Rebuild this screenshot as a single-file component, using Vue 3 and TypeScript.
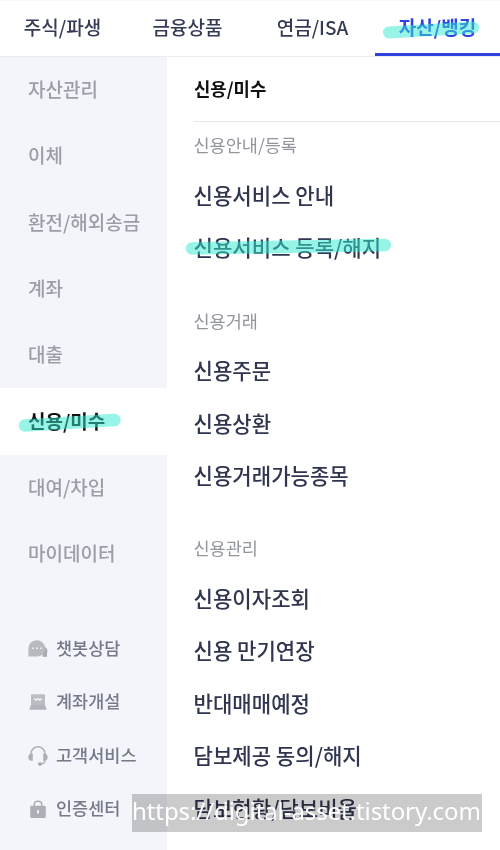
<script setup lang="ts">
type IconName = 'chat' | 'account' | 'headset' | 'lock'

interface Group {
  label: string
  items: { text: string; marked?: boolean }[]
}

const tabs: string[] = ['주식/파생', '금융상품', '연금/ISA', '자산/뱅킹']
const activeTab = '자산/뱅킹'

const categories: string[] = ['자산관리', '이체', '환전/해외송금', '계좌', '대출', '신용/미수', '대여/차입', '마이데이터']
const activeCategory = '신용/미수'

const shortcuts: { icon: IconName; text: string }[] = [
  { icon: 'chat', text: '챗봇상담' },
  { icon: 'account', text: '계좌개설' },
  { icon: 'headset', text: '고객서비스' },
  { icon: 'lock', text: '인증센터' },
]

const groups: Group[] = [
  { label: '신용안내/등록', items: [{ text: '신용서비스 안내' }, { text: '신용서비스 등록/해지', marked: true }] },
  { label: '신용거래', items: [{ text: '신용주문' }, { text: '신용상환' }, { text: '신용거래가능종목' }] },
  {
    label: '신용관리',
    items: [
      { text: '신용이자조회' },
      { text: '신용 만기연장' },
      { text: '반대매매예정' },
      { text: '담보제공 동의/해지' },
      { text: '담보현황/담보비율' },
    ],
  },
]
</script>

<template>
  <div class="screen">
    <nav class="tabs">
      <a v-for="tab in tabs" :key="tab" class="tab" :class="{ active: tab === activeTab }">
        <span>{{ tab }}</span>
        <svg v-if="tab === activeTab" class="marker marker-tab" viewBox="0 0 97 20">
          <path d="M6 12.500L90 7.500" stroke-width="12" />
        </svg>
      </a>
    </nav>
    <div class="body">
      <aside class="side">
        <a v-for="c in categories" :key="c" class="category" :class="{ active: c === activeCategory }">
          <span>{{ c }}</span>
          <svg v-if="c === activeCategory" class="marker marker-category" viewBox="0 0 104 22">
            <path d="M7 13.500L96.500 8" stroke-width="12.500" />
          </svg>
        </a>
        <div class="shortcuts">
          <a v-for="s in shortcuts" :key="s.text" class="shortcut">
            <svg class="icon" viewBox="0 0 20 20">
              <g v-if="s.icon === 'chat'">
                <path d="M15 7a5.500 5.500 0 0 1 4 7.500v3.200h-4.500z" fill="#a7abb2" />
                <path d="M.4 17.500V9.700A8.400 8.200 0 1 1 9 17.600H.4z" fill="#b7babf" />
                <path d="M4.200 8.500h1.700v1.600H4.200zM8.100 8.500h1.700v1.600H8.100zM12 8.500h1.700v1.600H12z" fill="#f4f5fa" />
              </g>
              <g v-else-if="s.icon === 'account'">
                <path d="M3 2.300h14v11.500H3z" fill="#babdc2" />
                <path d="M3 13h14l1.800 4.700H1.200z" fill="#b0b3b9" />
                <path d="M6.800 6l1.500 3L10 6l1.700 3 1.500-3M6 7.300h8" fill="none" stroke="#f4f5fa" stroke-width=".85" />
              </g>
              <g v-else-if="s.icon === 'headset'">
                <path d="M3 9V7.800a7 7 0 0 1 14 0V9" fill="none" stroke="#aeb1b7" stroke-width="1.500" />
                <path d="M4.800 7.600v7.100C2 15.300.3 13.700.3 11.200s1.700-4.100 4.500-3.600zM15.200 7.600v7.100c2.800.6 4.500-1 4.500-3.500s-1.700-4.100-4.500-3.600z" fill="#aeb1b7" />
                <path d="M17.200 14.200c-.4 2.700-2.200 3.800-5.200 3.900" fill="none" stroke="#aeb1b7" stroke-width="1.400" />
                <ellipse cx="12" cy="18" rx="2.200" ry="1.700" fill="#a4a7ad" />
              </g>
              <g v-else>
                <path d="M6.300 8V5.300Q6.300 2.300 10 2.300t3.700 3V8" fill="none" stroke="#acafb5" stroke-width="1.600" />
                <rect x="2.200" y="6.700" width="15.600" height="12.200" rx="1.400" fill="#acafb5" />
                <rect x="9.200" y="11" width="1.700" height="3.400" rx=".5" fill="#fff" />
              </g>
            </svg>
            <span>{{ s.text }}</span>
          </a>
        </div>
      </aside>
      <main class="content">
        <h1 class="title">신용/미수</h1>
        <section v-for="g in groups" :key="g.label" class="group">
          <h2 class="label">{{ g.label }}</h2>
          <a v-for="item in g.items" :key="item.text" class="item">
            <span>{{ item.text }}</span>
            <svg v-if="item.marked" class="marker marker-item" viewBox="0 0 208 20">
              <path d="M7 11.500L200 8" stroke-width="12.500" />
            </svg>
          </a>
        </section>
      </main>
    </div>
    <div class="watermark-shade"></div>
    <div class="watermark">https://digital-asset.tistory.com</div>
  </div>
</template>

<style>
body {
  background: #fff;
}
</style>

<style scoped>
.screen {
  position: relative;
  width: 500px;
  height: 850px;
  overflow: hidden;
  background: #fff;
  font-family: 'Noto Sans CJK KR', sans-serif;
  font-weight: 500;
  white-space: nowrap;
}
.tabs {
  display: grid;
  grid-template-columns: repeat(4, 125px);
  height: 57px;
  box-sizing: border-box;
  border-top: 1px solid #f7f7f8;
  border-bottom: 1px solid #ececee;
}
.tab {
  position: relative;
  display: flex;
  align-items: center;
  justify-content: center;
  box-sizing: border-box;
  height: 55px;
  padding-bottom: 4px;
  font-size: 19px;
  color: #353b55;
}
.tab.active {
  border-bottom: 3px solid #2e43df;
  padding: 0 0 1px;
  font-weight: 700;
  color: #2f43e3;
}
.body {
  display: flex;
  height: 793px;
}
.side {
  width: 167px;
  background: #f4f5fa;
}
.category {
  position: relative;
  display: flex;
  align-items: center;
  box-sizing: border-box;
  height: 66.300px;
  padding: 0 0 3px 28px;
  font-size: 19px;
  color: #9b9ea6;
}
.category.active {
  background: #fff;
  color: #111;
  font-weight: 700;
}
.shortcuts {
  padding-top: 35px;
}
.shortcut {
  display: flex;
  align-items: center;
  gap: 8px;
  height: 53.400px;
  padding-left: 28px;
  font-size: 17.500px;
  color: #747a89;
}
.shortcut span {
  padding-bottom: 3px;
}
.icon {
  width: 20px;
  height: 20px;
}
.content {
  flex: 1;
  padding-left: 26.500px;
}
.title {
  display: flex;
  align-items: center;
  box-sizing: border-box;
  height: 65px;
  margin: 0;
  padding: 0 0 2px 0.500px;
  border-bottom: 1px solid #e6e7e9;
  font-size: 17.800px;
  font-weight: 700;
  color: #111;
}
.group {
  margin-bottom: 23.500px;
}
.label {
  display: flex;
  align-items: center;
  box-sizing: border-box;
  height: 46.700px;
  margin: 0;
  padding-bottom: 1px;
  font-size: 17.500px;
  font-weight: 400;
  color: #92959c;
}
.item {
  position: relative;
  display: flex;
  align-items: center;
  height: 52.500px;
  font-size: 21.100px;
  color: #303650;
}
.marker {
  position: absolute;
  fill: none;
  stroke: #31ebd1;
  stroke-linecap: round;
  opacity: 0.5;
}
.marker-tab {
  left: 8px;
  top: 19px;
  width: 97px;
  height: 20px;
}
.marker-category {
  left: 18px;
  top: 24px;
  width: 104px;
  height: 22px;
}
.marker-item {
  left: -9px;
  top: 16px;
  width: 208px;
  height: 20px;
}
.watermark-shade {
  position: absolute;
  left: 132px;
  top: 794px;
  width: 349.500px;
  height: 37.500px;
  background: #cbcbcb;
  mix-blend-mode: multiply;
}
.watermark {
  position: absolute;
  left: 132px;
  top: 793px;
  color: #fff;
  font-family: 'Noto Sans', sans-serif;
  font-size: 24px;
  font-weight: 400;
  letter-spacing: -0.080px;
  line-height: 36px;
}
</style>
